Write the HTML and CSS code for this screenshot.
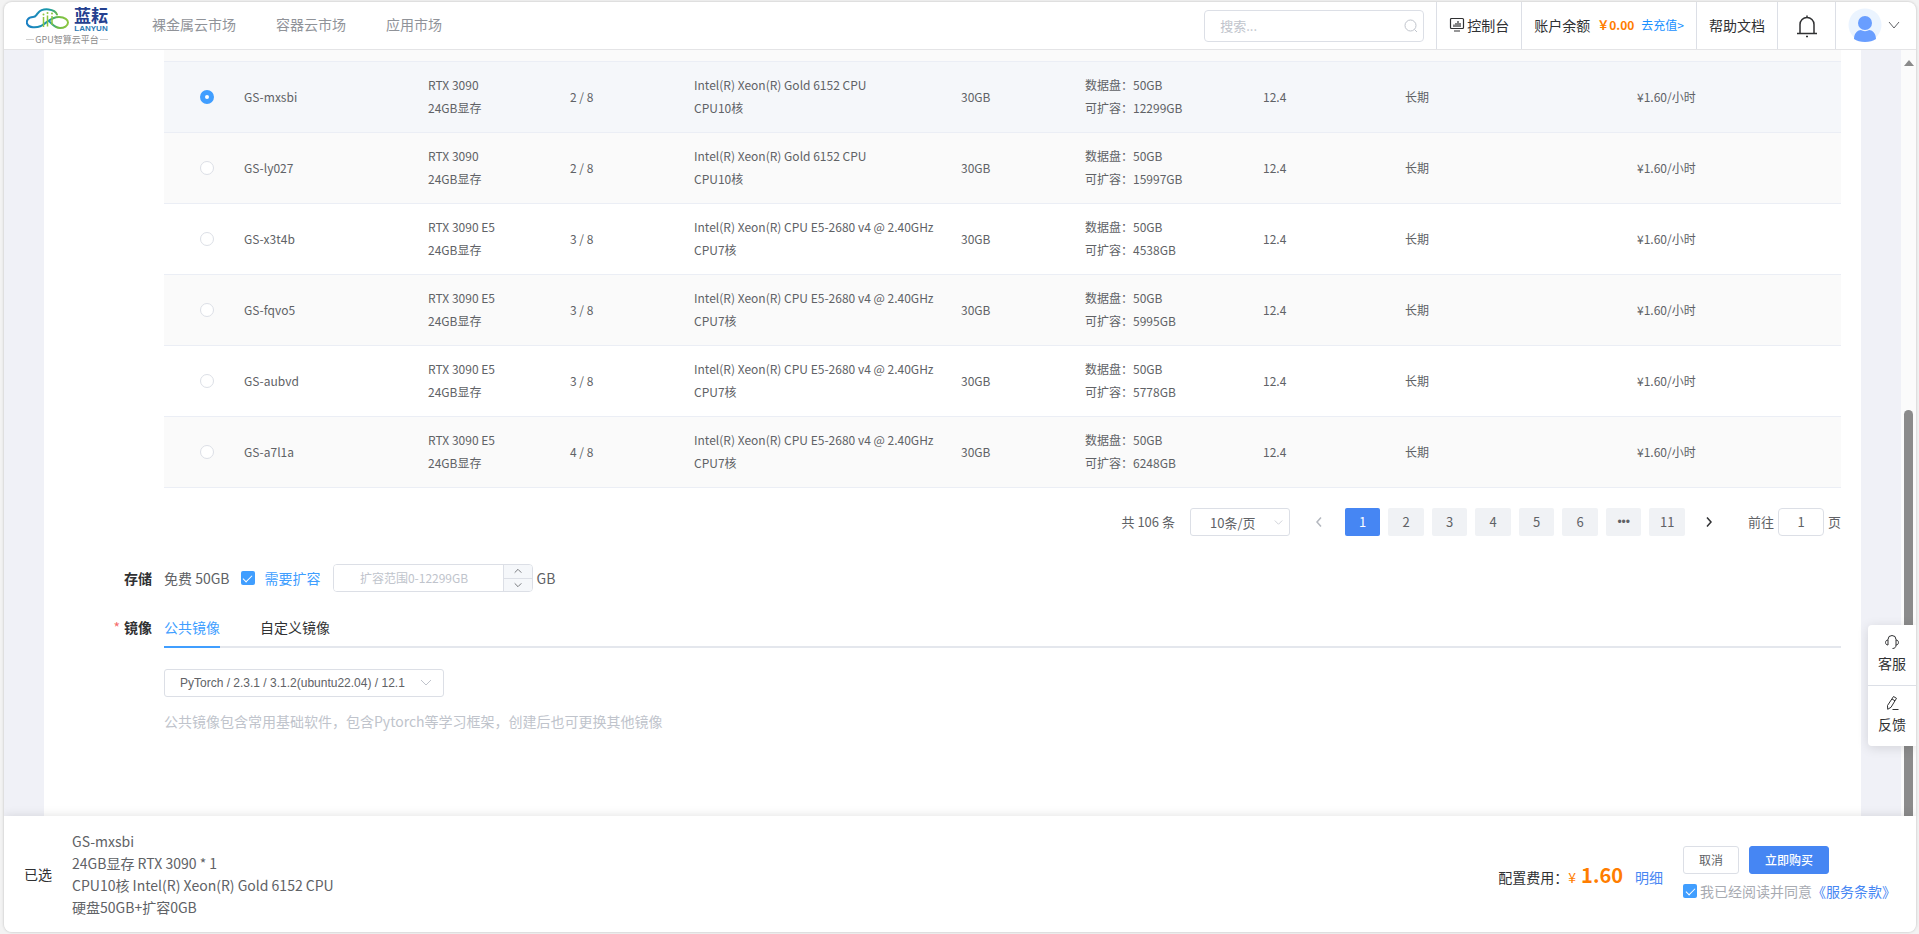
FILE: index.html
```html
<!DOCTYPE html>
<html lang="zh-CN">
<head>
<meta charset="utf-8">
<title>蓝耘 GPU智算云平台</title>
<link rel="stylesheet" href="styles.css">
</head>
<body>
<div class="frame">
  <header class="header">
    <a class="logo" href="#">
      <span class="logo-top">
        <svg class="logo-mark" viewBox="0 0 44 22" aria-hidden="true">
          <defs>
            <linearGradient id="cloud" x1="0" y1="0" x2="1" y2="0">
              <stop offset="0" stop-color="#1b80c4"/>
              <stop offset=".55" stop-color="#1a9aa8"/>
              <stop offset=".75" stop-color="#6dbb45"/>
              <stop offset="1" stop-color="#8cc63f"/>
            </linearGradient>
          </defs>
          <path d="M31 6.500C29 1 17-1 12 5 10 7 10 9 7 9 2 9 0 13 1.200 16 3 20 10 20 15 18 22 14 25 9 33 9c6 0 9 3 9 5.500 0 3.500-4 5.500-8 5.500-5 0-7-3-10-6" fill="none" stroke="url(#cloud)" stroke-width="2" stroke-linecap="round"/>
          <path d="M17.500 9v10M21.500 7.500v11M26 8v9" stroke="#8cc63f" stroke-width="1.500"/>
          <g fill="#8cc63f" stroke="none"><circle cx="17.500" cy="6.500" r="1"/><circle cx="21.500" cy="5" r="1"/><circle cx="26" cy="5.500" r="1"/></g>
        </svg>
        <span class="logo-name"><b>蓝耘</b><i>LANYUN</i></span>
      </span>
      <span class="logo-sub">GPU智算云平台</span>
    </a>
    <nav class="nav">
      <a href="#">裸金属云市场</a>
      <a href="#">容器云市场</a>
      <a href="#">应用市场</a>
    </nav>
    <label class="search">
      <input type="text" placeholder="搜索..." aria-label="搜索">
      <svg viewBox="0 0 16 16" aria-hidden="true"><circle cx="7.500" cy="7.500" r="5.500"/><path d="M11.500 11.500l2.500 2.500"/></svg>
    </label>
    <a class="cell console" href="#">
      <svg viewBox="0 0 16 16" aria-hidden="true"><path d="M2.500 1.500h11a1 1 0 0 1 1 1v8a1 1 0 0 1-1 1h-11a1 1 0 0 1-1-1v-8a1 1 0 0 1 1-1zM5 7.500v2.500M7 6v4M9 4v6M11 6v4M5 14h6"/></svg>
      控制台
    </a>
    <div class="cell balance"><span>账户余额</span><strong>￥0.00</strong><a href="#">去充值&gt;</a></div>
    <a class="cell docs" href="#">帮助文档</a>
    <button class="cell bell" aria-label="通知">
      <svg viewBox="0 0 24 24" aria-hidden="true"><path d="M5 19.500V10.500a7 7 0 0 1 14 0v9M2 19.500h20M12 1.500v2M11 22.500h2"/></svg>
    </button>
    <button class="cell user" aria-label="用户菜单">
      <svg class="avatar" viewBox="0 0 34 34" aria-hidden="true"><circle cx="17" cy="17" r="16.500" fill="#ebf4ff"/><circle cx="17" cy="15" r="7" fill="#699eff"/><path d="M6 31c0-6 4-9 7-9 2 1.500 6 1.500 8 0 3 0 7 3 7 9-5 4-17 4-22 0z" fill="#699eff"/></svg>
      <svg class="chev" viewBox="0 0 12 12" aria-hidden="true"><path d="M1 3l5 6 5-6"/></svg>
    </button>
  </header>

  <div class="body">
    <main class="panel">
      <div class="table-wrap">
        <table class="machines">
          <colgroup><col class="c-radio"><col class="c-name"><col class="c-gpu"><col class="c-free"><col class="c-cpu"><col class="c-mem"><col class="c-disk"><col class="c-cuda"><col class="c-term"><col class="c-price"></colgroup>
          <tbody>
            <tr class="peek"><td colspan="10"></td></tr>
            <tr class="selected"><td><input type="radio" name="m" aria-label="GS-mxsbi" checked></td><td>GS-mxsbi</td><td>RTX 3090<br>24GB显存</td><td>2 / 8</td><td>Intel(R) Xeon(R) Gold 6152 CPU<br>CPU10核</td><td>30GB</td><td>数据盘：50GB<br>可扩容：12299GB</td><td>12.4</td><td>长期</td><td>¥1.60/小时</td></tr>
            <tr class="striped"><td><input type="radio" name="m" aria-label="GS-ly027"></td><td>GS-ly027</td><td>RTX 3090<br>24GB显存</td><td>2 / 8</td><td>Intel(R) Xeon(R) Gold 6152 CPU<br>CPU10核</td><td>30GB</td><td>数据盘：50GB<br>可扩容：15997GB</td><td>12.4</td><td>长期</td><td>¥1.60/小时</td></tr>
            <tr><td><input type="radio" name="m" aria-label="GS-x3t4b"></td><td>GS-x3t4b</td><td>RTX 3090 E5<br>24GB显存</td><td>3 / 8</td><td>Intel(R) Xeon(R) CPU E5-2680 v4 @ 2.40GHz<br>CPU7核</td><td>30GB</td><td>数据盘：50GB<br>可扩容：4538GB</td><td>12.4</td><td>长期</td><td>¥1.60/小时</td></tr>
            <tr class="striped"><td><input type="radio" name="m" aria-label="GS-fqvo5"></td><td>GS-fqvo5</td><td>RTX 3090 E5<br>24GB显存</td><td>3 / 8</td><td>Intel(R) Xeon(R) CPU E5-2680 v4 @ 2.40GHz<br>CPU7核</td><td>30GB</td><td>数据盘：50GB<br>可扩容：5995GB</td><td>12.4</td><td>长期</td><td>¥1.60/小时</td></tr>
            <tr><td><input type="radio" name="m" aria-label="GS-aubvd"></td><td>GS-aubvd</td><td>RTX 3090 E5<br>24GB显存</td><td>3 / 8</td><td>Intel(R) Xeon(R) CPU E5-2680 v4 @ 2.40GHz<br>CPU7核</td><td>30GB</td><td>数据盘：50GB<br>可扩容：5778GB</td><td>12.4</td><td>长期</td><td>¥1.60/小时</td></tr>
            <tr class="striped"><td><input type="radio" name="m" aria-label="GS-a7l1a"></td><td>GS-a7l1a</td><td>RTX 3090 E5<br>24GB显存</td><td>4 / 8</td><td>Intel(R) Xeon(R) CPU E5-2680 v4 @ 2.40GHz<br>CPU7核</td><td>30GB</td><td>数据盘：50GB<br>可扩容：6248GB</td><td>12.4</td><td>长期</td><td>¥1.60/小时</td></tr>
          </tbody>
        </table>
      </div>

      <div class="pagination">
        <span>共 106 条</span>
        <span class="select page-size"><select aria-label="每页条数"><option>10条/页</option></select><svg viewBox="0 0 12 12" aria-hidden="true"><path d="M1 4l5 5 5-5"/></svg></span>
        <button class="arrow off" aria-label="上一页"><svg viewBox="0 0 12 12" aria-hidden="true"><path d="M8 1.500L4 6l4 4.500"/></svg></button>
        <div class="pages"><button class="on">1</button><button>2</button><button>3</button><button>4</button><button>5</button><button>6</button><button class="more">•••</button><button>11</button></div>
        <button class="arrow next" aria-label="下一页"><svg viewBox="0 0 12 12" aria-hidden="true"><path d="M4 1.500L8 6l-4 4.500"/></svg></button>
        <label class="jump">前往<input type="text" value="1">页</label>
      </div>

      <div class="row storage">
        <span class="label">存储</span>
        <div class="storage-body">
          <span>免费 50GB</span>
          <label class="check expand"><input type="checkbox" checked>需要扩容</label>
          <span class="stepper">
            <input type="text" placeholder="扩容范围0-12299GB" aria-label="扩容大小">
            <span class="steps">
              <button aria-label="增加"><svg viewBox="0 0 12 12" aria-hidden="true"><path d="M2 8l4-4 4 4"/></svg></button>
              <button aria-label="减少"><svg viewBox="0 0 12 12" aria-hidden="true"><path d="M2 4l4 4 4-4"/></svg></button>
            </span>
          </span>
          <span class="unit">GB</span>
        </div>
      </div>

      <div class="row image">
        <span class="label"><em>*</em>镜像</span>
        <div class="image-body">
          <div class="tabs"><button class="on">公共镜像</button><button>自定义镜像</button></div>
          <span class="select image-select"><select aria-label="镜像"><option>PyTorch / 2.3.1 / 3.1.2(ubuntu22.04) / 12.1</option></select><svg viewBox="0 0 12 12" aria-hidden="true"><path d="M1 3l5 5 5-5"/></svg></span>
          <p class="hint">公共镜像包含常用基础软件，包含Pytorch等学习框架，创建后也可更换其他镜像</p>
        </div>
      </div>
    </main>
    <div class="scrollbar" aria-hidden="true"><span class="up"></span><span class="thumb"></span></div>
  </div>

  <footer class="footer">
    <span class="chosen">已选</span>
    <div class="summary">
      <div>GS-mxsbi</div>
      <div>24GB显存 RTX 3090 * 1</div>
      <div>CPU10核 Intel(R) Xeon(R) Gold 6152 CPU</div>
      <div>硬盘50GB+扩容0GB</div>
    </div>
    <div class="cost"><span>配置费用：</span><span class="yen">¥</span><strong>1.60</strong><a href="#">明细</a></div>
    <div class="actions">
      <div class="buttons"><button>取消</button><button class="primary">立即购买</button></div>
      <div class="agree"><label class="check"><input type="checkbox" checked>我已经阅读并同意</label><a href="#">《服务条款》</a></div>
    </div>
  </footer>

  <aside class="float">
    <a href="#"><svg viewBox="0 0 16 16" aria-hidden="true"><path d="M4 6V5.500a4 4 0 0 1 8 0V6M4 6c-3.300 0-3.300 5 0 5zM12 6c3.300 0 3.300 5 0 5zM12 11c0 2-1 3.500-3.500 3.500"/></svg>客服</a>
    <a href="#"><svg viewBox="0 0 16 16" aria-hidden="true"><path d="M9.500 1.500l3 1.800-5.500 9-3.300 2-.2-3.800zM8 4l3 1.800M8.500 14.500h6"/></svg>反馈</a>
  </aside>
</div>
</body>
</html>
```
FILE: styles.css
```css
* { box-sizing: border-box; }
html, body { height: 100%; }
body {
  margin: 0;
  padding: 2px 3px 2px 4px;
  background: #f3f3f3;
  color: #606266;
  font: 14px/22px "Noto Sans CJK SC", sans-serif;
  overflow: hidden;
}
a { color: inherit; text-decoration: none; }
button, input, select { font: inherit; color: inherit; }
button { padding: 0; border: 0; background: none; cursor: pointer; }
svg { display: block; fill: none; stroke: currentColor; flex: none; }

.frame {
  position: relative;
  display: flex;
  flex-direction: column;
  height: 100%;
  border-radius: 8px;
  background: #fff;
  box-shadow: 0 0 2px 1px #d8d8d8;
  overflow: hidden;
}

/* header */
.header { display: flex; align-items: stretch; height: 48px; flex: none; border-bottom: 1px solid #e4e4e6; color: #303133; }
.logo { display: flex; flex-direction: column; width: 82px; margin: 4px 0 0 22px; }
.logo-top { display: flex; gap: 4px; height: 27px; }
.logo-mark { width: 44px; height: 22px; margin-top: 2px; }
.logo-name { display: flex; flex-direction: column; align-items: center; color: #25408f; }
.logo-name b { font-size: 17px; line-height: 18px; }
.logo-name i { font: 700 8px/9px "Liberation Sans", sans-serif; color: #2a7ab5; }
.logo-sub { display: flex; align-items: center; gap: 1px; font-size: 9px; line-height: 13px; color: #8c8c8c; white-space: nowrap; }
.logo-sub::before, .logo-sub::after { content: ""; flex: 1; height: 1px; background: #d0d0d0; }
.nav { display: flex; flex: 1; align-items: center; gap: 40px; margin-left: 44px; padding-bottom: 3px; color: #909399; }
.search { position: relative; align-self: center; width: 220px; }
.search input { width: 100%; height: 32px; padding: 0 30px 0 15px; border: 1px solid #dcdfe6; border-radius: 4px; outline: 0; font-size: 13px; }
input::placeholder { color: #c0c4cc; opacity: 1; }
.search svg { position: absolute; right: 5px; top: 8px; width: 16px; height: 16px; color: #c0c4cc; }
.cell { display: flex; align-items: center; padding: 0 12px 2px; border-left: 1px solid #dcdfe6; white-space: nowrap; }
.console { margin-left: 12px; gap: 2px; }
.console svg { width: 16px; height: 16px; stroke-width: 1.2; }
.balance { gap: 3px; }
.balance strong { margin-left: 4px; font-size: 12px; font-weight: 700; color: #ff7d00; }
.balance a { margin-left: 4px; font-size: 12px; color: #1890ff; }
.bell { width: 58px; padding: 0; justify-content: center; }
.bell svg { width: 24px; height: 24px; stroke-width: 1.5; }
.user { width: 81px; gap: 6px; }
.avatar { width: 34px; height: 34px; stroke: none; }
.chev { width: 12px; height: 12px; color: #606266; }

/* scrolling area */
.body { display: flex; flex: 1; min-height: 0; background: #f0f1f7; overflow: hidden; }
.panel { flex: 1; min-width: 0; margin: 0 40px; background: #fff; }
.scrollbar { display: flex; flex-direction: column; align-items: center; width: 15px; padding-top: 10px; background: #fbfbfb; }
.up { border: 5px solid transparent; border-top: 0; border-bottom: 6px solid #8a8a8a; }
.thumb { flex: 1; width: 9px; margin-top: 344px; border-radius: 5px 5px 0 0; background: #8b8b8b; }

.table-wrap { padding: 0 20px 0 120px; }
.machines { width: 100%; table-layout: fixed; border-collapse: separate; border-spacing: 0; font-size: 12px; line-height: 23px; }
.machines td { height: 71px; padding: 0 0 2px 10px; border-bottom: 1px solid #ebeef5; white-space: nowrap; }
.machines .peek td { height: 12px; padding: 0; background: #fafafa; }
.striped td { background: #fafafa; }
.selected td { background: #f5f7fa; }
.machines td:first-child { padding: 0 0 0 16px; }
.c-radio { width: 70px; } .c-name { width: 184px; } .c-gpu { width: 142px; } .c-free { width: 124px; } .c-cpu { width: 267px; }
.c-mem { width: 124px; } .c-disk { width: 178px; } .c-cuda { width: 142px; } .c-term { width: 232px; } .c-price { width: 214px; }
input[type="radio"] { appearance: none; display: block; width: 14px; height: 14px; margin: 0 auto; border: 1px solid #dcdfe6; border-radius: 50%; background: #fff; }
input[type="radio"]:checked { border: 5px solid #409eff; }

/* pagination */
.pagination { display: flex; justify-content: flex-end; align-items: center; padding: 20px 20px 0; font-size: 13px; line-height: 28px; }
.select { position: relative; display: block; }
.select select { appearance: none; display: block; width: 100%; height: 28px; padding: 0 25px 0 15px; border: 1px solid #dcdfe6; border-radius: 3px; background: #fff; outline: 0; }
.select svg { position: absolute; right: 12px; top: 8px; width: 12px; height: 12px; color: #c0c4cc; }
.page-size { width: 100px; margin-left: 15px; }
.page-size select { padding-left: 19px; }
.page-size svg { right: 7px; width: 9px; }
.arrow { display: flex; align-items: center; justify-content: center; width: 48px; height: 28px; color: #303133; }
.arrow svg { width: 12px; height: 12px; stroke-width: 1.5; }
.arrow.off { margin: 0 2px 0 5px; color: #b4b8bf; }
.pages { display: flex; gap: 8px; width: 340px; }
.pages button { flex: 1; min-width: 0; height: 28px; border-radius: 2px; background: #f0f2f5; font-size: 13px; }
.pages .on { background: #4686f3; color: #fff; }
.pages .more { font: 12px "Liberation Sans", sans-serif; }
.jump { display: flex; align-items: center; margin-left: 15px; }
.jump input { width: 46px; height: 28px; margin: 0 4px; border: 1px solid #dcdfe6; border-radius: 4px; text-align: center; outline: 0; }

/* form rows */
.row { display: flex; padding-right: 20px; }
.label { width: 108px; margin-right: 12px; text-align: right; font-weight: 700; color: #303133; }
.label em { margin-right: 4px; font-style: normal; font-weight: 400; color: #f56c6c; }
.storage { margin-top: 28px; align-items: center; }
.storage-body { display: flex; align-items: center; }
.check { display: flex; align-items: center; gap: 3px; }
.check input { appearance: none; width: 14px; height: 14px; margin: 0; border-radius: 2px; background: #409eff; display: grid; place-items: center; }
.check input::before { content: ""; width: 8px; height: 4px; margin-bottom: 2px; border: solid #fff; border-width: 0 0 1px 1px; transform: rotate(-45deg); }
.expand { gap: 10px; margin: 0 12px 0 11px; color: #409eff; }
.stepper { display: flex; width: 200px; height: 28px; border: 1px solid #dcdfe6; border-radius: 4px; overflow: hidden; }
.stepper input { flex: 1; min-width: 0; padding: 0 8px 0 0; border: 0; outline: 0; text-align: center; font-size: 12px; }
.steps { display: flex; flex-direction: column; width: 29px; border-left: 1px solid #dcdfe6; background: #f5f7fa; }
.steps button { flex: 1; display: grid; place-items: center; }
.steps button + button { border-top: 1px solid #dcdfe6; }
.steps svg { width: 10px; height: 10px; }
.unit { margin-left: 4px; }
.image { margin-top: 24px; }
.image-body { flex: 1; min-width: 0; }
.tabs { display: flex; gap: 40px; border-bottom: 2px solid #e4e7ed; color: #303133; }
.tabs button { height: 32px; margin-bottom: -2px; padding-bottom: 8px; border-bottom: 2px solid transparent; }
.tabs .on { color: #409eff; border-color: #409eff; }
.image-select { width: 280px; margin-top: 21px; font: 12px "Liberation Sans", sans-serif; }
.hint { margin: 13px 0 0; color: #c0c4cc; }

/* footer */
.footer { position: relative; display: flex; align-items: center; flex: none; height: 116px; padding: 0 20px; background: #fff; box-shadow: 0 0 10px rgba(0, 0, 0, .12); }
.chosen { color: #303133; }
.summary { flex: 1; margin-left: 20px; }
.cost { display: flex; align-items: baseline; margin-right: 20px; padding-top: 4px; color: #303133; }
.yen { color: #ff7d00; }
.cost strong { margin: 0 12px 0 5px; font-size: 20px; font-weight: 700; color: #ff7d00; }
.cost a, .agree a { color: #4686f3; }
.buttons { display: flex; gap: 10px; }
.buttons button { width: 56px; height: 28px; border: 1px solid #dcdfe6; border-radius: 3px; font-size: 12px; line-height: 20px; }
.buttons .primary { width: 80px; border-color: #4686f3; background: #4686f3; color: #fff; font-weight: 500; }
.agree { display: flex; margin-top: 6px; color: #a8abb2; }

/* floating shortcuts */
.float { position: absolute; right: 0; top: 623px; width: 48px; border-radius: 4px 0 0 4px; background: #fff; box-shadow: 0 2px 12px rgba(0, 0, 0, .12); color: #303133; }
.float a { display: flex; flex-direction: column; align-items: center; gap: 2px; height: 60px; padding-top: 9px; }
.float a + a { height: 61px; border-top: 1px solid #dcdfe6; }
.float svg { width: 16px; height: 16px; }
```
